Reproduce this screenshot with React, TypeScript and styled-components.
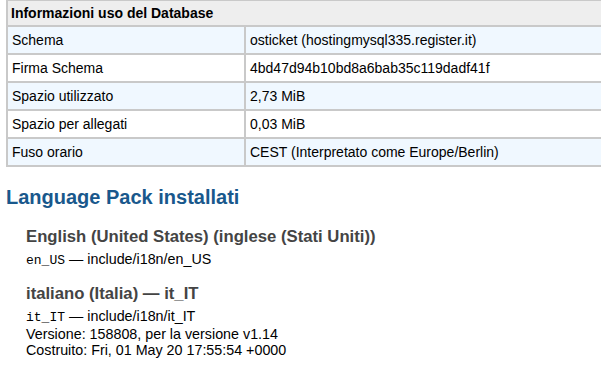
import { createGlobalStyle } from 'styled-components'
import styled from 'styled-components'

const dbInfo = [
	{ label: 'Schema', value: 'osticket (hostingmysql335.register.it)' },
	{ label: 'Firma Schema', value: '4bd47d94b10bd8a6bab35c119dadf41f' },
	{ label: 'Spazio utilizzato', value: '2,73 MiB' },
	{ label: 'Spazio per allegati', value: '0,03 MiB' },
	{ label: 'Fuso orario', value: 'CEST (Interpretato come Europe/Berlin)' },
]

const languagePacks = [
	{
		title: 'English (United States) (inglese (Stati Uniti))',
		code: 'en_US',
		path: 'include/i18n/en_US',
		details: [],
	},
	{
		title: 'italiano (Italia) — it_IT',
		code: 'it_IT',
		path: 'include/i18n/it_IT',
		details: [
			'Versione: 158808, per la versione v1.14',
			'Costruito: Fri, 01 May 20 17:55:54 +0000',
		],
	},
]

export default function App() {
	return (
		<>
			<GlobalStyle />
			<Page>
				<TableWrap>
					<InfoTable>
						<thead>
							<tr>
								<HeaderCell colSpan={2}>Informazioni uso del Database</HeaderCell>
							</tr>
						</thead>
						<tbody>
							{dbInfo.map((row, i) => (
								<Row key={row.label} $alt={i % 2 === 0}>
									<LabelCell>{row.label}</LabelCell>
									<ValueCell>{row.value}</ValueCell>
								</Row>
							))}
						</tbody>
					</InfoTable>
				</TableWrap>

				<SectionTitle>Language Pack installati</SectionTitle>
				<PackList>
					{languagePacks.map(pack => (
						<Pack key={pack.code}>
							<PackTitle>{pack.title}</PackTitle>
							<PackLine>
								<Code>{pack.code}</Code> — {pack.path}
							</PackLine>
							{pack.details.map(line => (
								<PackLine key={line}>{line}</PackLine>
							))}
						</Pack>
					))}
				</PackList>
			</Page>
		</>
	)
}

const GlobalStyle = createGlobalStyle`
	html, body {
		margin: 0;
		background: #fff;
		overflow: hidden;
	}
	body {
		font-family: 'Liberation Sans', Arial, sans-serif;
		color: #000;
	}
`

const Page = styled.div`
	width: 601px;
	overflow: hidden;
`

const TableWrap = styled.div`
	margin-top: -1px;
	padding-left: 6px;
`

const InfoTable = styled.table`
	width: 640px;
	background: #c9c9c9;
	border-collapse: separate;
	border-spacing: 2px;
	font-size: 14px;
	line-height: 16px;
`

const HeaderCell = styled.th`
	height: 24px;
	padding: 0 3px;
	box-sizing: border-box;
	background: #eeeeee;
	text-align: left;
	font-weight: bold;
`

const Row = styled.tr<{ $alt: boolean }>`
	background: ${p => (p.$alt ? '#f0f8ff' : '#ffffff')};
`

const LabelCell = styled.td`
	width: 236px;
	height: 26px;
	padding: 0 4px;
	box-sizing: border-box;
`

const ValueCell = styled.td`
	height: 26px;
	padding: 0 4px;
	box-sizing: border-box;
`

const SectionTitle = styled.h2`
	margin: 19px 0 0 6px;
	font-size: 20px;
	line-height: 23px;
	font-weight: bold;
	color: #19588c;
`

const PackList = styled.div`
	display: flex;
	flex-direction: column;
	gap: 15px;
	margin-top: 18px;
	padding-left: 26px;
`

const Pack = styled.div`
	display: flex;
	flex-direction: column;
`

const PackTitle = styled.h3`
	margin: 0 0 5px;
	font-size: 16.7px;
	line-height: 19px;
	font-weight: bold;
	color: #444;
`

const PackLine = styled.div`
	font-size: 14.3px;
	line-height: 16px;
	color: #000;
`

const Code = styled.code`
	font-family: 'Liberation Mono', 'Courier New', monospace;
	font-size: 13px;
`
